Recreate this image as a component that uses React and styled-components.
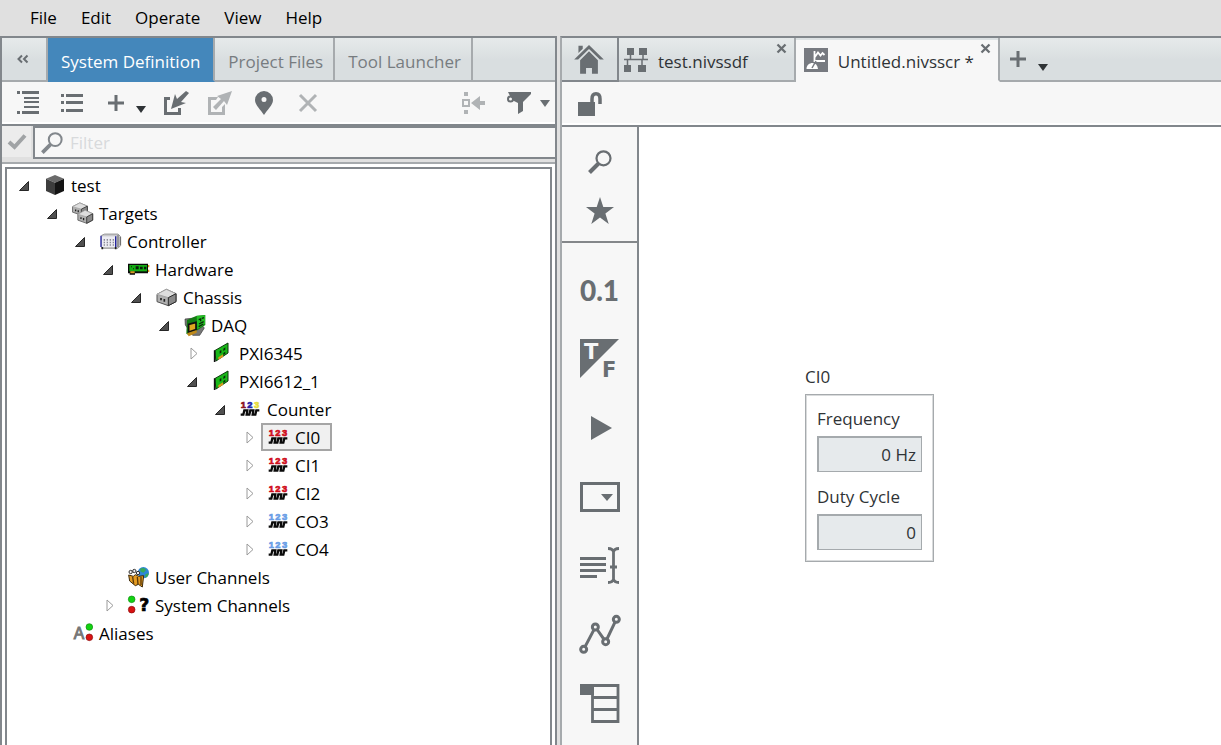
import React, { useState } from 'react';
import styled, { createGlobalStyle, css } from 'styled-components';

const GlobalStyle = createGlobalStyle`
  :root {
    --chrome: #e0e0e0;
    --panel: #f7f7f7;
    --line: #82878c;
    --line-light: #a6aaad;
    --icon: #696e72;
    --icon-disabled: #b0b3b5;
    --accent: #4487bb;
    --tab: linear-gradient(#e6eaeb, #d9dee0 50%, #d9dee0);
  }

  * {
    box-sizing: border-box;
  }

  body {
    margin: 0;
    background: var(--chrome);
  }

  body, button, input {
    font-family: 'Open Sans', 'Noto Sans', sans-serif;
    font-size: 17px;
    line-height: 24px;
  }

  button {
    margin: 0;
    padding: 0;
    border: 0;
    background: none;
    color: inherit;
  }

  svg {
    display: block;
    flex: none;
    overflow: visible;
  }
`;

const Window = styled.div`
  display: flex;
  flex-direction: column;
  height: 100vh;
  overflow: hidden;
`;

const MenuBar = styled.nav`
  display: flex;
  flex: none;
  align-items: center;
  height: 36px;
  padding-left: 18px;
  color: #000;
`;

const MenuItem = styled.button`
  padding: 0 12px;
`;

const Panes = styled.div`
  display: grid;
  flex: 1;
  grid-template-columns: 557fr 661fr;
  gap: 3px;
  min-height: 0;
`;

const LeftPane = styled.section`
  display: flex;
  flex-direction: column;
  min-width: 0;
  min-height: 0;
  border: 2px solid var(--line);
  border-bottom: 0;
  background: #fff;
`;

const RightPane = styled.section`
  display: flex;
  flex-direction: column;
  min-width: 0;
  min-height: 0;
  border-top: 2px solid var(--line);
  border-left: 2px solid var(--line-light);
  background: #fff;
`;

const TabRow = styled.div`
  display: flex;
  flex: none;
  height: 44px;
  background: var(--tab);
`;

const TabFiller = styled.div`
  display: flex;
  flex: 1;
  border-bottom: 2px solid var(--line-light);
`;

const PaneTab = styled.button`
  flex: none;
  padding: 5px 10px 0 13px;
  border-right: 2px solid var(--line-light);
  border-bottom: 2px solid var(--line-light);
  color: #777c80;
  white-space: nowrap;

  ${({ $active }) => $active && css`
    padding-right: 13px;
    border-bottom-color: var(--accent);
    background: var(--accent);
    background-clip: padding-box;
    color: #fff;
  `}
`;

const CollapseButton = styled.button`
  display: flex;
  flex: none;
  align-items: center;
  justify-content: center;
  width: 46px;
  padding-right: 3px;
  padding-bottom: 1px;
  border-right: 2px solid var(--line-light);
  border-bottom: 2px solid var(--line-light);
`;

const Toolbar = styled.div`
  display: flex;
  flex: none;
  height: 44px;
  padding-left: 4px;
  border-bottom: 2px solid var(--line);
  background: var(--panel);
  box-shadow: inset 0 -2px #fff;
`;

const ToolButton = styled.button`
  display: flex;
  flex: none;
  align-items: center;
  justify-content: center;
  width: 44px;
  color: var(--icon);

  &:disabled {
    color: var(--icon-disabled);
  }
`;

const SplitButton = styled(ToolButton)`
  justify-content: flex-start;
  gap: ${({ $gap }) => $gap}px;
  width: 60px;
  padding-left: ${({ $inset }) => $inset}px;
`;

const Caret = styled.span`
  border: 5px solid transparent;
  border-top: 7px solid ${({ $color }) => $color || '#2f3336'};
  border-bottom: 0;
  margin-top: ${({ $drop }) => $drop || 0}px;
`;

const Spacer = styled.div`
  flex: 1;
`;

const FilterRow = styled.div`
  display: flex;
  flex: none;
  align-items: flex-start;
  gap: 2px;
  height: 38px;
  border-bottom: 2px solid var(--line-light);
  background: var(--chrome);
`;

const ApplyButton = styled.button`
  display: flex;
  align-items: center;
  justify-content: center;
  width: 29px;
  height: 31px;
  background: #ececec;
  color: #a0a3a5;
`;

const FilterBox = styled.label`
  display: flex;
  flex: 1;
  align-items: center;
  gap: 7px;
  height: 33px;
  padding-left: 6px;
  border: 2px solid var(--line);
  border-right: 0;
  background: var(--panel);
  color: var(--line);
`;

const FilterInput = styled.input`
  flex: 1;
  min-width: 0;
  padding: 0;
  border: 0;
  outline: 0;
  background: none;
  color: #333;

  &::placeholder {
    color: #d8dadc;
    opacity: 1;
  }
`;

const TreeFrame = styled.div`
  flex: 1;
  min-height: 0;
  margin: 3px 3px 0;
  padding-top: 2px;
  overflow: hidden;
  border: 2px solid var(--line);
  border-bottom: 0;
`;

const TreeList = styled.ul`
  margin: 0;
  padding: 0;
  list-style: none;

  & & {
    padding-left: 28px;
  }
`;

const TreeRow = styled.div`
  display: flex;
  align-items: center;
  height: 28px;
  color: #000;
`;

const Expander = styled.button`
  display: flex;
  justify-content: center;
  width: 30px;
  padding-top: 1px;
  padding-left: ${({ $open }) => ($open ? 3 : 8)}px;
`;

const ExpanderGap = styled.span`
  width: 30px;
`;

const TreeLabel = styled.button`
  display: flex;
  align-items: center;
  gap: 5px;
  height: 28px;
  padding: 2px 10px 0 5px;
  border: 2px solid ${({ $selected }) => ($selected ? '#a5a5a5' : 'transparent')};
  background: ${({ $selected }) => ($selected ? '#f0f0f0' : 'none')};
  white-space: nowrap;
`;

const HomeTab = styled.button`
  display: flex;
  flex: none;
  align-items: center;
  justify-content: center;
  width: 57px;
  padding-right: 2px;
  border-right: 2px solid var(--line);
  border-bottom: 2px solid var(--line);
  color: var(--icon);
`;

const DocTab = styled.div`
  display: flex;
  flex: none;
  padding-left: ${({ $active }) => ($active ? 8 : 5)}px;
  border-right: 2px solid var(--line-light);
  border-bottom: 2px solid var(--line-light);
  color: var(--icon);

  ${({ $active }) => $active && css`
    border-bottom-color: var(--panel);
    background: var(--panel);
    background-clip: padding-box;
    box-shadow: inset 0 2px #dde2e4;
  `}
`;

const DocButton = styled.button`
  display: flex;
  align-items: center;
  gap: 10px;
  padding-top: 2px;
  white-space: nowrap;
`;

const DocName = styled.span`
  padding-top: 3px;
  color: #2f3336;
`;

const CloseButton = styled.button`
  align-self: flex-start;
  margin-left: ${({ $gap }) => $gap}px;
  padding: 6px 8px 4px 0;
`;

const EditorBody = styled.div`
  display: flex;
  flex: 1;
  min-height: 0;
`;

const EditorToolbar = styled(Toolbar)`
  height: 45px;
  padding-left: 6px;
`;

const Palette = styled.aside`
  display: flex;
  flex: none;
  flex-direction: column;
  width: 77px;
  overflow: hidden;
  border-right: 2px solid var(--line);
  background: var(--panel);
`;

const PaletteGroup = styled.div`
  display: flex;
  flex: none;
  flex-direction: column;
  padding: ${({ $compact }) => ($compact ? '10px 0 6px' : '12px 0')};

  & + & {
    border-top: 2px solid #84878a;
  }
`;

const PaletteButton = styled.button`
  display: flex;
  flex: none;
  align-items: center;
  justify-content: center;
  height: ${({ $compact }) => ($compact ? 49 : 69)}px;
  color: var(--icon);
`;

const NumericGlyph = styled.span`
  font-family: Lato, 'Open Sans', sans-serif;
  font-size: 28px;
  font-weight: 900;
`;

const Canvas = styled.main`
  position: relative;
  flex: 1;
  overflow: hidden;
  background: #fff;
`;

const Widget = styled.div`
  position: absolute;
  top: 238px;
  left: 166px;
  width: 129px;
  color: #2f3336;
`;

const WidgetTitle = styled.div`
  padding-bottom: 5px;
`;

const WidgetBox = styled.div`
  display: flex;
  flex-direction: column;
  gap: 12px;
  padding: 11px;
  border: 1px solid #a6aaad;
  box-shadow: inset 0 0 0 1px #d9dbdc;
`;

const Field = styled.label`
  display: flex;
  flex-direction: column;
  gap: 4px;
  line-height: 26px;
  white-space: nowrap;
`;

const FieldInput = styled.input`
  width: 100%;
  height: 36px;
  padding: 0 5px;
  border: 1px solid #a5aaad;
  border-width: 2px 1px 1px 2px;
  border-radius: 0;
  outline: 0;
  background: #e6eaec;
  color: #2f3336;
  text-align: right;
`;

/* ---- toolbar icons ---- */

const CollapseIcon = () => (
  <svg width="12" height="8" viewBox="0 0 12 8" fill="none" stroke="#696e72" strokeWidth="2">
    <path d="M5 .5 1.5 4 5 7.5M10.5.5 7 4l3.5 3.5" />
  </svg>
);

const OutlineIcon = () => (
  <svg width="22" height="24" viewBox="0 0 22 24" fill="currentColor">
    <path d="M0 0h3v3H0zM5 0h17v3H5zM7 6h15v2H7zM7 10h15v2H7zM7 15h15v2H7zM0 20h3v3H0zM5 20h17v3H5z" />
  </svg>
);

const ListIcon = () => (
  <svg width="22" height="20" viewBox="0 0 22 20" fill="currentColor">
    <path d="M0 1h3v3H0zM5 1h17v3H5zM0 8h3v3H0zM5 8h17v3H5zM0 16h3v3H0zM5 16h17v3H5z" />
  </svg>
);

const PlusIcon = () => (
  <svg width="16" height="16" viewBox="0 0 16 16" fill="currentColor">
    <path d="M6.5 0h3v6.5H16v3H9.500V16h-3V9.500H0v-3h6.500z" />
  </svg>
);

const ImportIcon = () => (
  <svg width="25" height="24" viewBox="0 0 25 24" fill="currentColor">
    <path d="M0 6h6v3H3v12h11v-4h3v7H0z" />
    <path d="m22 0 3 2-8 9 5 1-15 6L11 3l2 5z" />
  </svg>
);

const ExportIcon = () => (
  <svg width="24" height="24" viewBox="0 0 24 24" fill="currentColor">
    <path d="M0 6h10L8 9H3v12h11v-5l3-3v11H0z" />
    <path d="m24 0-5 14-3-4-8 9-3-3 8-8-4-3z" />
  </svg>
);

const PinIcon = () => (
  <svg width="18" height="24" viewBox="0 0 18 24" fill="currentColor" fillRule="evenodd">
    <path d="M9 0a9 9 0 0 1 9 9c0 5-6 10-9 15C6 19 0 14 0 9a9 9 0 0 1 9-9zm0 6a2.500 2.500 0 1 0 0 5 2.500 2.500 0 0 0 0-5z" />
  </svg>
);

const DeleteIcon = () => (
  <svg width="18" height="18" viewBox="0 0 18 18" stroke="currentColor" strokeWidth="3">
    <path d="m1 1 16 16M17 1 1 17" />
  </svg>
);

const LocateIcon = () => (
  <svg width="23" height="22" viewBox="0 0 23 22" fill="currentColor">
    <path d="M2 0h4v4H2zM2 18h4v4H2z" />
    <path d="M1 8h6v6H1z" fill="none" stroke="currentColor" strokeWidth="2" />
    <path d="m9 11 9-7v5h5v4h-5v5z" />
  </svg>
);

const FunnelIcon = () => (
  <svg width="24" height="22" viewBox="0 0 24 22" fill="currentColor">
    <path d="M1 0h23v2l-8 8v9l-5 3V11L5 8z" />
    <circle cx="3.500" cy="7" r="2.500" fill="#f7f7f7" stroke="currentColor" strokeWidth="2" />
  </svg>
);

const CheckIcon = () => (
  <svg width="18" height="16" viewBox="0 0 18 16" fill="none" stroke="currentColor" strokeWidth="4">
    <path d="m1 8 5.500 5L17 1.500" />
  </svg>
);

const SearchIcon = ({ size = 24 }) => (
  <svg width={size} height={size} viewBox="0 0 24 24" fill="none" stroke="currentColor">
    <circle cx="15.500" cy="8.300" r="7" strokeWidth="2.200" />
    <path d="m10.500 13.500-9 9" strokeWidth="4" />
  </svg>
);

const LockIcon = () => (
  <svg width="24" height="24" viewBox="0 0 24 24" fill="currentColor">
    <path d="M0 10h17v14H0z" />
    <path d="M14 10V7c0-3.500 1.500-5.200 4-5.200s4 1.700 4 5.200v5" fill="none" stroke="currentColor" strokeWidth="3.500" />
  </svg>
);

/* ---- document tab icons ---- */

const HomeIcon = () => (
  <svg width="30" height="29" viewBox="0 0 90 88" fill="currentColor">
    <path d="M13 2h13v9L13 24z" />
    <path d="M0 44 45 0l45 44H78L45 12 12 44z" />
    <path d="m45 19 27 27v41H54V70H36v17H18V46z" />
  </svg>
);

const DiagramIcon = () => (
  <svg width="24" height="24" viewBox="0 0 24 24" fill="currentColor">
    <path d="M3 0h7v7H3zM15 0h8v7h-8zM0 17h7v7H0zM14 17h8v7h-8z" />
    <path d="M6.500 7v4M19 7v4M0 11.500h24M3.500 12v5M18 12v5" stroke="currentColor" strokeWidth="1.500" />
  </svg>
);

const ScreenIcon = () => (
  <svg width="24" height="24" viewBox="0 0 24 24">
    <path d="M0 0h24v24H0z" fill="#777a80" />
    <path d="M10.500 3v10H21M10.500 9.500l3.500-5 2.500 3 2-2.500 2 2" fill="none" stroke="#fff" strokeWidth="1.800" />
    <path d="M2.500 21c0-4 3-6 6-6s5 2 5.500 6z" fill="#fff" />
    <path d="m8 20 4-7" stroke="#777a80" strokeWidth="1.500" />
  </svg>
);

const CloseIcon = () => (
  <svg width="9" height="9" viewBox="0 0 9 9" stroke="currentColor" strokeWidth="2.300">
    <path d="m.5.5 8 8m0-8-8 8" />
  </svg>
);

/* ---- palette icons ---- */

const StarIcon = () => (
  <svg width="28" height="27" viewBox="0 0 28 27" fill="currentColor">
    <path d="m14 0 3.300 10H28l-8.600 6.400L22.700 27 14 20.500 5.300 27l3.300-10.600L0 10h10.700z" />
  </svg>
);

const BooleanIcon = () => (
  <svg width="40" height="40" viewBox="0 0 40 40" fill="currentColor" fontFamily="DejaVu Sans" fontWeight="700" fontSize="21">
    <path d="M0 0h39L0 39z" />
    <text x="4" y="20" fill="#f7f7f7">T</text>
    <text x="22" y="38">F</text>
  </svg>
);

const PlayIcon = () => (
  <svg width="24" height="24" viewBox="0 0 24 24" fill="currentColor">
    <path d="m3 0 21 12L3 24z" />
  </svg>
);

const DropDownIcon = () => (
  <svg width="40" height="30" viewBox="0 0 40 30">
    <path d="M1.500 1.500h37v27h-37z" fill="none" stroke="currentColor" strokeWidth="3" />
    <path d="M21 12h12l-6 7z" fill="currentColor" />
  </svg>
);

const TextIcon = () => (
  <svg width="40" height="37" viewBox="0 0 40 37" fill="currentColor">
    <path d="M0 10h26v3H0zM0 16h26v3H0zM0 22h26v3H0zM0 28h17v3H0z" />
    <path d="M28 1.500c3 0 5 1 5.500 3.500C34 2.500 36 1.500 39 1.500M28 35.500c3 0 5-1 5.500-3.500.5 2.500 2.500 3.500 5.500 3.500M33.500 4v29M30 20h7" fill="none" stroke="currentColor" strokeWidth="2.800" />
  </svg>
);

const ChartIcon = () => (
  <svg width="42" height="39" viewBox="0 0 126 117" fill="#f7f7f7" stroke="currentColor" strokeWidth="9">
    <path d="m14 103 35-67 31 44 32-67" fill="none" />
    <circle cx="14" cy="103" r="9" />
    <circle cx="49" cy="36" r="9" />
    <circle cx="80" cy="80" r="9" />
    <circle cx="112" cy="13" r="9" />
  </svg>
);

const TableIcon = () => (
  <svg width="40" height="40" viewBox="0 0 40 40">
    <path d="M0 0h14v11H0z" fill="currentColor" />
    <path d="M12.500 1.500h25.500v36H12.500zM12 13.500h26M12 25.500h26" fill="none" stroke="currentColor" strokeWidth="2.800" />
  </svg>
);

/* ---- tree icons ---- */

const TreeIcon = ({ children }) => (
  <svg width="22" height="22" viewBox="0 0 66 66">{children}</svg>
);

const CubeIcon = () => (
  <TreeIcon>
    <path d="m33 0 27 11-27 12L6 11z" fill="#6b6b6b" />
    <path d="m6 11 27 12v37L6 48z" fill="#3d3d3d" />
    <path d="m60 11-27 12v37l27-12z" fill="#141414" />
  </TreeIcon>
);

const Box = ({ transform }) => (
  <g transform={transform} strokeWidth="3" strokeLinejoin="round">
    <path d="M2 16 30 1l29 13v24L36 50 2 38z" fill="#b0b0b0" stroke="#555" />
    <path d="M2 16 30 1l29 13-23 12z" fill="#dedede" stroke="#a5a5a5" />
    <path d="m36 26 23-12v24L36 50z" fill="#8a8a8a" stroke="#2c2c2c" />
    <path d="M14 27v7M24 30v8" stroke="#222" strokeWidth="5" />
  </g>
);

const TargetsIcon = () => (
  <TreeIcon>
    <Box transform="matrix(.78 0 0 .75 0 -1)" />
    <Box transform="matrix(.78 0 0 .8 16 21)" />
  </TreeIcon>
);

const ChassisIcon = () => (
  <TreeIcon>
    <Box transform="translate(1 6)" />
  </TreeIcon>
);

const ControllerIcon = () => (
  <TreeIcon>
    <path d="M5 13 14 9h40l8 8v27l-9 8H5z" fill="#c9c9cc" stroke="#777" strokeWidth="2" />
    <path d="M5 16h42v32H5z" fill="#ececf2" />
    <path d="M47 16v32M3 14v34" stroke="#2525a0" strokeWidth="4" />
    <path d="M54 12v36M61 18v24" stroke="#666" strokeWidth="3" />
    <path d="M13 24v20M22 24v20M31 24v20M40 24v20" stroke="#8a8a98" strokeWidth="4" strokeDasharray="5 3" />
    <path d="M7 48v7M47 48v7" stroke="#222" strokeWidth="5" />
  </TreeIcon>
);

const CardIcon = () => (
  <TreeIcon>
    <path d="M0 14h60v29H21v4H5v-4H0z" fill="#0a0a0a" />
    <path d="M4 18h53v19H4z" fill="#14ad14" />
    <path d="M23 22h9v9h-9zM36 23h8v8h-8zM48 23h7v8h-7zM9 22h3v3H9zM15 28h3v3h-3z" fill="#0a1f0a" />
    <path d="M7 37h13v6H7zM60 18h4v7h-4zM60 32h4v7h-4z" fill="#d69c20" />
  </TreeIcon>
);

const DaqIcon = () => (
  <TreeIcon>
    <path d="m3 12 30-3 28 30-14 22H26L4 30z" fill="#777" stroke="#333" strokeWidth="2" />
    <path d="M9 15 38 2l26-2v30L40 46 14 60 7 56z" fill="#147a14" />
    <path d="M38 3 63 1v26L40 43z" fill="#24c024" />
    <path d="m14 28 22-6v22l-22 7z" fill="#e0a81f" stroke="#111" strokeWidth="5" />
    <path d="m44 14 6-2v7M54 10l6-2M45 27l14-7M44 35l14-8" stroke="#0b260b" strokeWidth="4" fill="none" />
    <path d="m9 55 29-10v8L14 64z" fill="#c08a1a" />
  </TreeIcon>
);

const ModuleIcon = () => (
  <TreeIcon>
    <path d="M8 23 48 0v30L12 54z" fill="#18b818" stroke="#0c3a0c" strokeWidth="3" />
    <path d="M8 22v35" stroke="#111" strokeWidth="5" />
    <path d="m23 24 5-3v8l-5 3zM34 17l6-4v7l-6 4zM34 30l6-4v6l-6 4z" fill="#0a2a0a" />
    <path d="m19 43 14-9v8l-14 8z" fill="#d69a1e" />
  </TreeIcon>
);

const CounterIcon = ({ colors }) => (
  <TreeIcon>
    <g fontFamily="Liberation Sans" fontWeight="700" fontSize="28">
      {colors.map((color, i) => (
        <text key={i} x={2 + i * 20} y="28" fill={color} stroke={color} strokeWidth="2">{i + 1}</text>
      ))}
    </g>
    <path d="M2 47h8l3-13h9l-2 13h8l3-13h9l-2 13h8l3-13h9" fill="none" stroke="#0a0a0a" strokeWidth="7" />
  </TreeIcon>
);

const UserIcon = () => (
  <TreeIcon>
    <circle cx="46" cy="17" r="17" fill="#2d86d6" />
    <path d="M36 6c8-6 17-2 18 3l-7 8-9-3zM52 22l10-4c0 8-5 13-10 14z" fill="#36a85a" />
    <path d="m2 24 14 4 6-5 10 5 15-2-4 34-12-8-9 4L5 42z" fill="#e39b22" stroke="#3d2a0c" strokeWidth="3" />
    <path d="m14 30 3 20M28 30l2 22M39 30v24" stroke="#5c3a08" strokeWidth="4" />
    <g fill="#eee" stroke="#333" strokeWidth="3">
      <circle cx="8" cy="15" r="5" />
      <circle cx="19" cy="12" r="5" />
      <circle cx="30" cy="18" r="5" />
    </g>
  </TreeIcon>
);

const SystemIcon = () => (
  <TreeIcon>
    <circle cx="11" cy="13" r="10" fill="#12d212" stroke="#0d8a0d" strokeWidth="2" />
    <circle cx="11" cy="44" r="10" fill="#d81212" stroke="#8a0d0d" strokeWidth="2" />
    <text x="34" y="48" fontFamily="DejaVu Sans" fontWeight="700" fontSize="52" stroke="#000" strokeWidth="2">?</text>
  </TreeIcon>
);

const AliasesIcon = () => (
  <TreeIcon>
    <text x="5" y="49" fontFamily="Liberation Sans" fontSize="47" fill="#777" stroke="#777" strokeWidth="3">A</text>
    <circle cx="52" cy="12" r="10" fill="#12d212" stroke="#0d8a0d" strokeWidth="2" />
    <circle cx="52" cy="43" r="10" fill="#d81212" stroke="#8a0d0d" strokeWidth="2" />
  </TreeIcon>
);

const OpenArrow = () => (
  <svg width="10" height="10" viewBox="0 0 10 10">
    <path d="M9.500.5v9h-9z" fill="#505050" stroke="#262626" />
  </svg>
);

const ClosedArrow = () => (
  <svg width="8" height="13" viewBox="0 0 8 13">
    <path d="M1 1v11l6-5.500z" fill="#fff" stroke="#9a9a9a" />
  </svg>
);

const INPUT_COLORS = ['#d00e1c', '#d00e1c', '#d00e1c'];
const OUTPUT_COLORS = ['#6a9ee6', '#6a9ee6', '#6a9ee6'];
const MIXED_COLORS = ['#8c1420', '#2020a8', '#e6dc3c'];

const channel = (name, colors) => ({
  name,
  icon: <CounterIcon colors={colors} />,
  closed: true,
});

const TREE = [
  {
    name: 'test',
    icon: <CubeIcon />,
    children: [
      {
        name: 'Targets',
        icon: <TargetsIcon />,
        children: [
          {
            name: 'Controller',
            icon: <ControllerIcon />,
            children: [
              {
                name: 'Hardware',
                icon: <CardIcon />,
                children: [
                  {
                    name: 'Chassis',
                    icon: <ChassisIcon />,
                    children: [
                      {
                        name: 'DAQ',
                        icon: <DaqIcon />,
                        children: [
                          { name: 'PXI6345', icon: <ModuleIcon />, closed: true },
                          {
                            name: 'PXI6612_1',
                            icon: <ModuleIcon />,
                            children: [
                              {
                                name: 'Counter',
                                icon: <CounterIcon colors={MIXED_COLORS} />,
                                children: [
                                  channel('CI0', INPUT_COLORS),
                                  channel('CI1', INPUT_COLORS),
                                  channel('CI2', INPUT_COLORS),
                                  channel('CO3', OUTPUT_COLORS),
                                  channel('CO4', OUTPUT_COLORS),
                                ],
                              },
                            ],
                          },
                        ],
                      },
                    ],
                  },
                ],
              },
              { name: 'User Channels', icon: <UserIcon /> },
              { name: 'System Channels', icon: <SystemIcon />, closed: true },
            ],
          },
        ],
      },
      { name: 'Aliases', icon: <AliasesIcon /> },
    ],
  },
];

const TreeNode = ({ node, selected, onSelect }) => {
  const [open, setOpen] = useState(!node.closed);
  const expandable = node.closed || node.children;

  return (
    <li>
      <TreeRow>
        {expandable ? (
          <Expander $open={open} aria-label={`Toggle ${node.name}`} onClick={() => setOpen(!open)}>
            {open ? <OpenArrow /> : <ClosedArrow />}
          </Expander>
        ) : (
          <ExpanderGap />
        )}
        <TreeLabel $selected={selected === node.name} onClick={() => onSelect(node.name)}>
          {node.icon}
          {node.name}
        </TreeLabel>
      </TreeRow>
      {open && node.children && (
        <TreeList>
          {node.children.map((child) => (
            <TreeNode key={child.name} node={child} selected={selected} onSelect={onSelect} />
          ))}
        </TreeList>
      )}
    </li>
  );
};

const SystemPane = () => {
  const [tab, setTab] = useState('System Definition');
  const [selected, setSelected] = useState('CI0');
  const [filter, setFilter] = useState('');

  return (
    <LeftPane>
      <TabRow>
        <CollapseButton aria-label="Collapse pane"><CollapseIcon /></CollapseButton>
        {['System Definition', 'Project Files', 'Tool Launcher'].map((name) => (
          <PaneTab key={name} $active={tab === name} onClick={() => setTab(name)}>{name}</PaneTab>
        ))}
        <TabFiller />
      </TabRow>
      <Toolbar>
        <ToolButton aria-label="Expand all"><OutlineIcon /></ToolButton>
        <ToolButton aria-label="Collapse all"><ListIcon /></ToolButton>
        <SplitButton $inset={14} $gap={12} aria-label="Add">
          <PlusIcon />
          <Caret $drop={12} />
        </SplitButton>
        <ToolButton aria-label="Import"><ImportIcon /></ToolButton>
        <ToolButton aria-label="Export" disabled><ExportIcon /></ToolButton>
        <ToolButton aria-label="Pin"><PinIcon /></ToolButton>
        <ToolButton aria-label="Delete" disabled><DeleteIcon /></ToolButton>
        <Spacer />
        <ToolButton aria-label="Locate" disabled><LocateIcon /></ToolButton>
        <SplitButton $inset={12} $gap={9} aria-label="Filter options">
          <FunnelIcon />
          <Caret $color="#696e72" />
        </SplitButton>
      </Toolbar>
      <FilterRow>
        <ApplyButton aria-label="Apply filter"><CheckIcon /></ApplyButton>
        <FilterBox>
          <SearchIcon size={22} />
          <FilterInput
            type="text"
            aria-label="Filter"
            placeholder="Filter"
            value={filter}
            onChange={(e) => setFilter(e.target.value)}
          />
        </FilterBox>
      </FilterRow>
      <TreeFrame>
        <TreeList>
          {TREE.map((node) => (
            <TreeNode key={node.name} node={node} selected={selected} onSelect={setSelected} />
          ))}
        </TreeList>
      </TreeFrame>
    </LeftPane>
  );
};

const EditorPane = () => (
  <RightPane>
    <TabRow>
      <HomeTab aria-label="Home"><HomeIcon /></HomeTab>
      <DocTab>
        <DocButton>
          <DiagramIcon />
          <DocName>test.nivssdf</DocName>
        </DocButton>
        <CloseButton $gap={29} aria-label="Close test.nivssdf"><CloseIcon /></CloseButton>
      </DocTab>
      <DocTab $active>
        <DocButton>
          <ScreenIcon />
          <DocName>Untitled.nivsscr *</DocName>
        </DocButton>
        <CloseButton $gap={7} aria-label="Close Untitled.nivsscr"><CloseIcon /></CloseButton>
      </DocTab>
      <TabFiller>
        <SplitButton $inset={10} $gap={12} aria-label="New tab">
          <PlusIcon />
          <Caret $drop={16} />
        </SplitButton>
      </TabFiller>
    </TabRow>
    <EditorToolbar>
      <ToolButton aria-label="Unlock"><LockIcon /></ToolButton>
    </EditorToolbar>
    <EditorBody>
      <Palette>
        <PaletteGroup $compact>
          <PaletteButton $compact aria-label="Search"><SearchIcon /></PaletteButton>
          <PaletteButton $compact aria-label="Favorites"><StarIcon /></PaletteButton>
        </PaletteGroup>
        <PaletteGroup>
          <PaletteButton aria-label="Numeric"><NumericGlyph>0.1</NumericGlyph></PaletteButton>
          <PaletteButton aria-label="Boolean"><BooleanIcon /></PaletteButton>
          <PaletteButton aria-label="Action"><PlayIcon /></PaletteButton>
          <PaletteButton aria-label="Drop-down"><DropDownIcon /></PaletteButton>
          <PaletteButton aria-label="Text"><TextIcon /></PaletteButton>
          <PaletteButton aria-label="Chart"><ChartIcon /></PaletteButton>
          <PaletteButton aria-label="Table"><TableIcon /></PaletteButton>
        </PaletteGroup>
      </Palette>
      <Canvas>
        <Widget>
          <WidgetTitle>CI0</WidgetTitle>
          <WidgetBox>
            <Field>
              Frequency
              <FieldInput type="text" readOnly value="0 Hz" />
            </Field>
            <Field>
              Duty Cycle
              <FieldInput type="text" readOnly value="0" />
            </Field>
          </WidgetBox>
        </Widget>
      </Canvas>
    </EditorBody>
  </RightPane>
);

const App = () => (
  <>
    <GlobalStyle />
    <Window>
      <MenuBar>
        {['File', 'Edit', 'Operate', 'View', 'Help'].map((name) => (
          <MenuItem key={name}>{name}</MenuItem>
        ))}
      </MenuBar>
      <Panes>
        <SystemPane />
        <EditorPane />
      </Panes>
    </Window>
  </>
);

export default App;
